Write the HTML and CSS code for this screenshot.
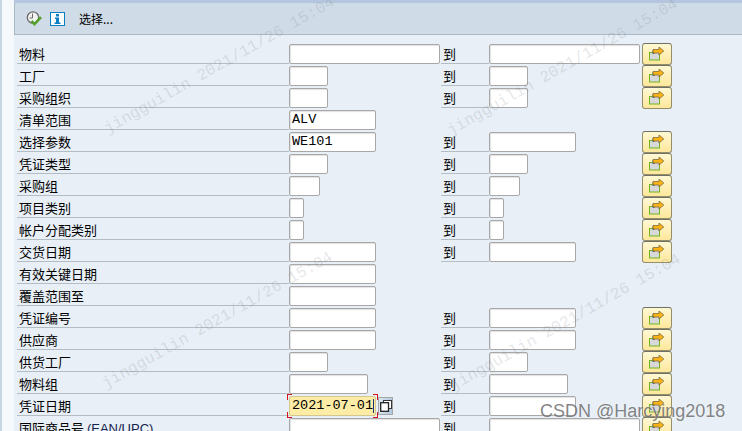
FILE: index.html
```html
<!DOCTYPE html>
<html>
    <head>
        <meta charset="utf-8">
        <title>选择</title>
        <link rel="stylesheet" href="styles.css">
    </head>
    <body>
        <svg class="defs" width="0" height="0">
            <symbol id="moreIcon" viewBox="0 0 16 14">
                <rect x="0.5" y="5.5" width="10" height="7.5" fill="#d8d8d8" stroke="#6fb51e"/>
                <path d="M3.500 3h2v4h-2z" fill="#666"/>
                <path d="M4 2.500h6V0l4.800 4L10 8V6H4z" fill="#fbb316" stroke="#6a5f3a" stroke-width="0.7"/>
            </symbol>
        </svg>
        <div class="frame">
            <div class="topBand"></div>
            <div class="toolbar">
                <svg class="clockIcon" width="17" height="16" viewBox="0 0 17 16">
                    <circle cx="7" cy="6.500" r="5.700" fill="#f2f2f2" stroke="#6b6b6b" stroke-width="1.300"/>
                    <path d="M6.500 2.500V7H3.500" fill="none" stroke="#6b6b6b"/>
                    <path d="M5.500 10l3 3.200 6.500-7" fill="none" stroke="#55a02c" stroke-width="2.600"/>
                </svg>
                <svg class="infoIcon" width="15" height="14" viewBox="0 0 15 14">
                    <rect x="0.500" y="0.500" width="14" height="13" fill="#fff" stroke="#0a7ec2"/>
                    <rect x="6" y="2" width="3" height="2.500" fill="#0a7ec2"/>
                    <path d="M5 5.500h4V10.500h1.500V12h-6v-1.500H6v-3.500H5z" fill="#0a7ec2"/>
                </svg>
                <span class="toolText">选择...</span>
            </div>
            <div class="form">
                <div class="row"><span class="label">物料</span><span class="field w150"></span><span class="to">到</span><span class="field high w150"></span><button class="more"><svg width="16" height="14"><use href="#moreIcon"/></svg></button></div>
                <div class="row"><span class="label">工厂</span><span class="field w38"></span><span class="to">到</span><span class="field high w38"></span><button class="more"><svg width="16" height="14"><use href="#moreIcon"/></svg></button></div>
                <div class="row"><span class="label">采购组织</span><span class="field w38"></span><span class="to">到</span><span class="field high w38"></span><button class="more"><svg width="16" height="14"><use href="#moreIcon"/></svg></button></div>
                <div class="row"><span class="label">清单范围</span><span class="field w86">ALV</span></div>
                <div class="row"><span class="label">选择参数</span><span class="field w86">WE101</span><span class="to">到</span><span class="field high w86"></span><button class="more"><svg width="16" height="14"><use href="#moreIcon"/></svg></button></div>
                <div class="row"><span class="label">凭证类型</span><span class="field w38"></span><span class="to">到</span><span class="field high w38"></span><button class="more"><svg width="16" height="14"><use href="#moreIcon"/></svg></button></div>
                <div class="row"><span class="label">采购组</span><span class="field w30"></span><span class="to">到</span><span class="field high w30"></span><button class="more"><svg width="16" height="14"><use href="#moreIcon"/></svg></button></div>
                <div class="row"><span class="label">项目类别</span><span class="field w14"></span><span class="to">到</span><span class="field high w14"></span><button class="more"><svg width="16" height="14"><use href="#moreIcon"/></svg></button></div>
                <div class="row"><span class="label">帐户分配类别</span><span class="field w14"></span><span class="to">到</span><span class="field high w14"></span><button class="more"><svg width="16" height="14"><use href="#moreIcon"/></svg></button></div>
                <div class="row"><span class="label">交货日期</span><span class="field w86"></span><span class="to">到</span><span class="field high w86"></span><button class="more"><svg width="16" height="14"><use href="#moreIcon"/></svg></button></div>
                <div class="row"><span class="label">有效关键日期</span><span class="field w86"></span></div>
                <div class="row"><span class="label">覆盖范围至</span><span class="field w86"></span></div>
                <div class="row"><span class="label">凭证编号</span><span class="field w86"></span><span class="to">到</span><span class="field high w86"></span><button class="more"><svg width="16" height="14"><use href="#moreIcon"/></svg></button></div>
                <div class="row"><span class="label">供应商</span><span class="field w86"></span><span class="to">到</span><span class="field high w86"></span><button class="more"><svg width="16" height="14"><use href="#moreIcon"/></svg></button></div>
                <div class="row"><span class="label">供货工厂</span><span class="field w38"></span><span class="to">到</span><span class="field high w38"></span><button class="more"><svg width="16" height="14"><use href="#moreIcon"/></svg></button></div>
                <div class="row"><span class="label">物料组</span><span class="field w78"></span><span class="to">到</span><span class="field high w78"></span><button class="more"><svg width="16" height="14"><use href="#moreIcon"/></svg></button></div>
                <div class="row"><span class="label">凭证日期</span>
                    <span class="dateCell">
                        <span class="field w86 active">2021-07-01<i class="caret"></i><i class="corner tl"></i><i class="corner tr"></i><i class="corner bl"></i><i class="corner br"></i></span>
                        <span class="calBtn"><svg width="12" height="12" viewBox="0 0 12 12"><rect x="3.500" y="0.500" width="8" height="8" fill="#fff" stroke="#333"/><rect x="0.700" y="2.700" width="7.800" height="8.600" fill="#fff" stroke="#222" stroke-width="1.300"/></svg></span>
                    </span>
                    <span class="to">到</span><span class="field high w86"></span><button class="more"><svg width="16" height="14"><use href="#moreIcon"/></svg></button></div>
                <div class="row"><span class="label">国际商品号 <span class="ean">(EAN/UPC)</span></span><span class="field w150"></span><span class="to">到</span><span class="field high w150"></span><button class="more"><svg width="16" height="14"><use href="#moreIcon"/></svg></button></div>
            </div>
        </div>
        <span class="mark markA">jingguilin 2021/11/26 15:04</span>
        <span class="mark markB">jingguilin 2021/11/26 15:04</span>
        <span class="mark markC">jingguilin 2021/11/26 15:04</span>
        <span class="mark markD">jingguilin 2021/11/26 15:04</span>
        <span class="csdn">CSDN @Harcying2018</span>
    </body>
</html>
```

FILE: styles.css
```css
html, body {
    margin: 0;
    height: 431px;
    overflow: hidden;
}
body {
    background: #f6f9fc;
    border-left: 2px solid #c8d5e4;
    box-sizing: border-box;
    font-family: "Noto Sans CJK SC", sans-serif;
    font-size: 13px;
    color: #000;
    position: relative;
}
.defs {
    position: absolute;
}
.frame {
    margin-left: 12px;
    height: 431px;
    background: #e8eff6;
}
.topBand {
    height: 3px;
    background: #b3c6dd;
}
.toolbar {
    height: 32px;
    background: #cfdce8;
    border-left: 1px solid #a9b8c6;
    border-bottom: 1px solid #a9b8c6;
    display: flex;
    align-items: center;
    padding-left: 11px;
    box-sizing: border-box;
}
.clockIcon {
    margin-right: 7px;
}
.infoIcon {
    margin-right: 14px;
}
.toolText {
    font-size: 12px;
}
.form {
    padding-top: 9px;
    padding-left: 3px;
}
.row {
    display: grid;
    grid-template-columns: 272px 152px 48px 153px 30px;
    height: 22px;
    align-items: start;
}
.label {
    grid-column: 1;
    height: 20px;
    line-height: 20px;
    border-bottom: 1px solid #b4bcc4;
    padding-left: 2px;
    box-sizing: border-box;
    white-space: nowrap;
}
.ean {
    font-family: "Liberation Sans", sans-serif;
    color: #14244e;
}
.field {
    grid-column: 2;
    justify-self: start;
    height: 20px;
    line-height: 18px;
    box-sizing: border-box;
    background: #fff;
    border: 1px solid #a8a8a8;
    border-radius: 2px;
    box-shadow: inset 1px 1px 1px #e2e2e2;
    padding-left: 2px;
    font-family: "Liberation Mono", monospace;
    font-size: 13.5px;
}
.w150 { width: 151px; }
.w86 { width: 87px; }
.w78 { width: 79px; }
.w38 { width: 39px; }
.w30 { width: 31px; }
.w14 { width: 15px; }
.to {
    grid-column: 3;
    height: 20px;
    line-height: 20px;
    border-bottom: 1px solid #b4bcc4;
    padding-left: 2px;
    box-sizing: border-box;
}
.field.high {
    grid-column: 4;
}
.more {
    grid-column: 5;
    width: 30px;
    height: 22px;
    padding: 0;
    margin-top: -1px;
    background: linear-gradient(#fff8d4, #fde79b);
    border: 1px solid #948e6c;
    border-top-color: #6f6f64;
    border-radius: 3px;
    display: flex;
    align-items: center;
    justify-content: center;
}
.dateCell {
    grid-column: 2;
    display: flex;
}
.active {
    background: #fdeca6;
    border-color: #d6c88c;
    box-shadow: none;
    position: relative;
    white-space: nowrap;
}
.caret {
    position: absolute;
    right: 1px;
    top: 2px;
    width: 1px;
    height: 14px;
    background: #1c2f7a;
}
.corner {
    position: absolute;
    width: 4px;
    height: 5px;
    border: 0 solid #d8121c;
}
.tl { left: -3px; top: -3px; border-width: 1px 0 0 1px; }
.tr { right: -3px; top: -3px; border-width: 1px 1px 0 0; }
.bl { left: -3px; bottom: -3px; border-width: 0 0 1px 1px; }
.br { right: -3px; bottom: -3px; border-width: 0 1px 1px 0; }
.calBtn {
    width: 15px;
    height: 18px;
    margin: 1px 0 0 2px;
    background: linear-gradient(90deg, #dbe5f0, #b2c7e0);
    border: 1px solid #a6a6a6;
    box-sizing: border-box;
    display: flex;
    align-items: center;
    justify-content: center;
}
.mark {
    position: absolute;
    font-family: "Liberation Mono", monospace;
    font-size: 16px;
    letter-spacing: 0.1px;
    color: rgba(120, 130, 140, 0.2);
    white-space: nowrap;
    transform: rotate(-29.5deg);
    transform-origin: left bottom;
}
.markA { left: 108px; top: 120px; }
.markB { left: 451px; top: 122px; }
.markC { left: 106px; top: 375px; }
.markD { left: 454px; top: 377px; }
.csdn {
    position: absolute;
    left: 538px;
    top: 401px;
    font-family: "Liberation Sans", sans-serif;
    font-size: 18px;
    color: rgba(100, 100, 100, 0.8);
    text-shadow: 0 0 2px rgba(255, 255, 255, 0.6);
}
```
